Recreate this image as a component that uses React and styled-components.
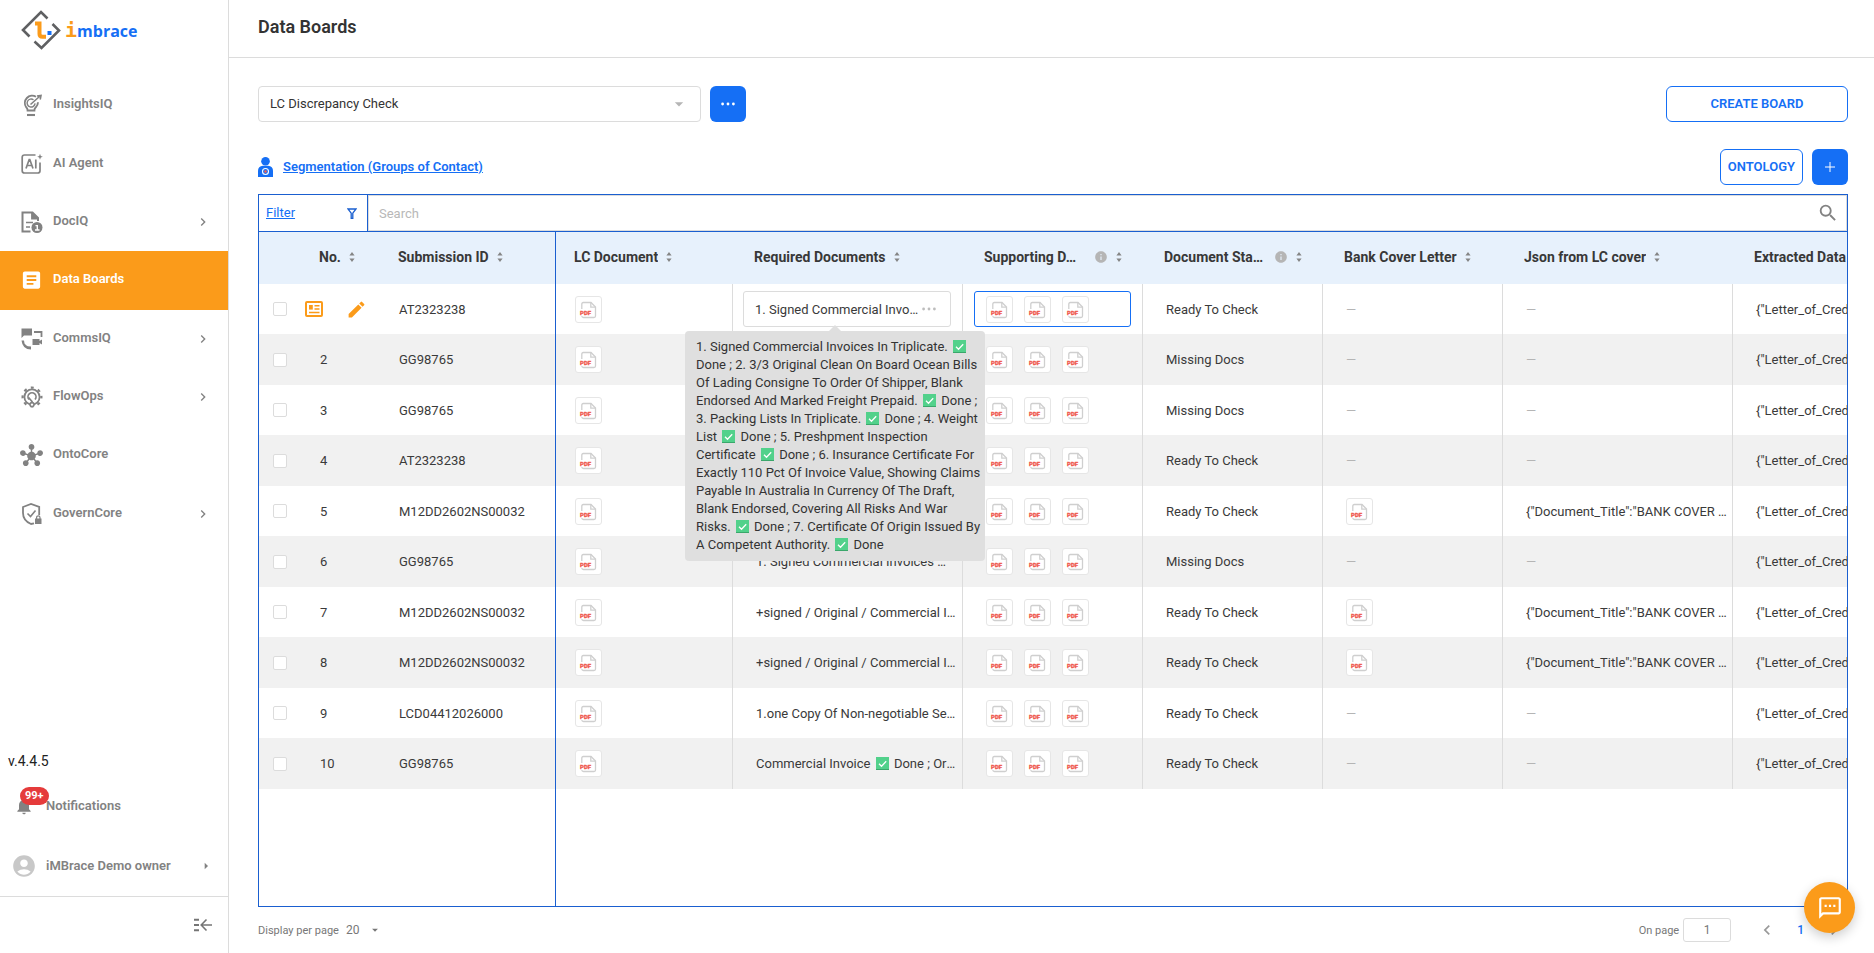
import { useState } from 'react';
import styled, { createGlobalStyle } from 'styled-components';
import {
  MdAccountCircle,
  MdArrowDropDown,
  MdArrowRight,
  MdArticle,
  MdChevronLeft,
  MdChevronRight,
  MdEdit,
  MdHub,
  MdInfo,
  MdNotifications,
  MdOutlineSms,
  MdSearch,
} from 'react-icons/md';

const GlobalStyle = createGlobalStyle`
  * {
    box-sizing: border-box;
  }

  body {
    margin: 0;
    font-family: Roboto, 'Liberation Sans', sans-serif;
    font-size: 13px;
    color: #3a3a3a;
    background: #fff;
  }

  button,
  input,
  select {
    font-family: inherit;
  }
`;

const blue = '#156ff5';
const line = '#1a5fd0';
const orange = '#fb9b1a';
const grey = '#828282';

/* ---------- icons ---------- */

const LogoMark = () => (
  <svg width='40' height='40' viewBox='0 0 40 40' fill='none' aria-hidden='true'>
    <g stroke='#5f6062' strokeWidth='2.6'>
      <path d='M26.5 8.5 20 2 2 20l6.5 6.5' />
      <path d='M31.5 14 38 20.5 20.5 38 13.5 31.5' />
    </g>
    <path d='M14 13.5h4.5V24q0 2.700 3 2.700H25' stroke={orange} strokeWidth='4' />
    <rect x='26.500' y='21' width='4' height='4' fill={blue} />
  </svg>
);

const BulbIcon = () => (
  <svg width='22' height='24' viewBox='0 0 22 24' fill='none' stroke='currentColor' aria-hidden='true'>
    <path d='M15 3.800A7.300 7.300 0 0 0 5.200 14.200q1.400 1.200 1.400 3.300h6.800q0-2.100 1.400-3.300a7.300 7.300 0 0 0 2.200-5' strokeWidth='1.900' />
    <path d='M6 22h8' strokeWidth='2.100' />
    <path d='M12.500 6.800a4 4 0 1 0 1.600 3.600' strokeWidth='1.400' />
    <path d='m9.500 11.500 9-8M16 3l4-.5-.8 4' strokeWidth='1.600' />
  </svg>
);

const AiIcon = () => (
  <svg width='22' height='22' viewBox='0 0 22 22' fill='none' stroke='currentColor' aria-hidden='true'>
    <path d='M14.500 2H3.500Q1.200 2 1.200 4.300v13.400Q1.200 20 3.500 20h13.200q2.300 0 2.300-2.300V9.500' strokeWidth='1.700' />
    <path d='m5 15.500 3.200-9h.6l3.200 9M6 12.500h5M14.800 6.500v9' strokeWidth='1.700' />
    <path d='m19 .8.800 2.200 2 .8-2 .8-.8 2.200-.8-2.200-2-.8 2-.8z' fill='currentColor' stroke='none' />
  </svg>
);

const DocIcon = () => (
  <svg width='22' height='22' viewBox='0 0 22 22' fill='none' stroke='currentColor' aria-hidden='true'>
    <path d='M9.500 20.500H1.500V1.500h10L17 7v3' strokeWidth='2' />
    <path d='M11 1.500V7.500h6' fill='currentColor' strokeWidth='1.800' />
    <path d='M5 11.500h7M5 16h4' strokeWidth='1.700' />
    <circle cx='16' cy='16.500' r='5.500' fill='currentColor' stroke='none' />
    <path d='M14.500 14.600h1.800v4M14 19h4.500' stroke='#fff' strokeWidth='1.400' />
  </svg>
);

const CommsIcon = () => (
  <svg width='22' height='22' viewBox='0 0 22 22' fill='currentColor' aria-hidden='true'>
    <path d='M.5.500H11v7H3L.5 10z' />
    <path d='M13 4h7.500v5' fill='none' stroke='currentColor' strokeWidth='1.800' />
    <path d='M11.500 11h7v2l2.500-1.500v5L18.500 15v2h-7z' />
    <path d='M.5 12.500h2.500l.5 3q1.600 2.300 3.300 2.800l3.200.2v3Q1.500 21.500.5 12.500z' />
  </svg>
);

const GearIcon = () => (
  <svg width='22' height='22' viewBox='0 0 22 22' fill='none' stroke='currentColor' aria-hidden='true'>
    <circle cx='11' cy='11' r='9.400' strokeWidth='2.200' strokeDasharray='2.950 4.430' strokeDashoffset='1.470' />
    <circle cx='11' cy='11' r='7.600' strokeWidth='1.800' />
    <path d='M8 13.500a4 4 0 1 1 6 0' strokeWidth='1.700' />
    <circle cx='11' cy='18.500' r='2' strokeWidth='1.600' fill='#fff' />
    <path d='M7.500 11.500 11 15.500v2' strokeWidth='1.800' />
  </svg>
);

const ShieldIcon = () => (
  <svg width='22' height='22' viewBox='0 0 22 22' fill='none' stroke='currentColor' aria-hidden='true'>
    <path d='M13 20.300 10 21Q2 17.500 2 10V4l8-3 8.200 3v8' strokeWidth='1.800' />
    <path d='m6.500 10.500 3 3 5-6' strokeWidth='1.600' />
    <path d='M14 15.500h6.500V21H14z' fill='currentColor' stroke='none' />
    <path d='M15.600 16v-1.500a1.700 1.700 0 0 1 3.400 0V16' strokeWidth='1.200' />
  </svg>
);

const CollapseIcon = () => (
  <svg width='20' height='14' viewBox='0 0 20 14' fill='none' stroke='#757575' aria-hidden='true'>
    <path d='M1 1.800h5M1 7h5M1 12.200h5' strokeWidth='2' />
    <path d='M19 7H9M13.500 1.500 8.200 7l5.300 5.500' strokeWidth='1.600' />
  </svg>
);

const SegmentIcon = () => (
  <svg width='15' height='20' viewBox='0 0 15 20' aria-hidden='true'>
    <circle cx='7.500' cy='4.300' r='4.300' fill={blue} />
    <path d='M0 20v-6q0-5 5-5.300h5q5 .3 5 5.300v6z' fill={blue} />
    <circle cx='7.500' cy='14.500' r='3' fill={blue} stroke='#fff' strokeWidth='1.100' />
    <circle cx='7.500' cy='14.500' r='1.300' fill='#f0605a' />
  </svg>
);

const FunnelIcon = () => (
  <svg width='10' height='11' viewBox='0 0 10 11' fill='none' stroke={line} aria-hidden='true'>
    <path d='M1 1h8L5.800 5.200V10.500H4.200V5.200z' strokeWidth='1.300' />
  </svg>
);

const CardIcon = () => (
  <svg width='18' height='16' viewBox='0 0 18 16' fill='none' stroke={orange} aria-hidden='true'>
    <rect x='1' y='1' width='16' height='14' rx='1' strokeWidth='2' />
    <path d='M4 4h3.800v4.600H4z' fill={orange} stroke='none' />
    <path d='M9.500 4.700H14.500M9.500 7.900H14.500M4 11.500h10.500' strokeWidth='1.500' />
  </svg>
);

const SortIcon = () => (
  <svg width='6' height='10' viewBox='0 0 6 10' fill='#858585' aria-hidden='true'>
    <path d='M3 0l2.600 3.400H.4zM3 10 .4 6.600h5.200z' />
  </svg>
);

const PdfIcon = () => (
  <svg width='25' height='25' viewBox='0 0 25 25' fill='none' role='img' aria-label='PDF'>
    <path d='M5.800 12V7q0-1.500 1.500-1.500H15l4.500 4.500v9q0 1.500-1.500 1.500H7.500q-1.500 0-1.700-1.500' stroke='#cfcfcf' strokeWidth='1.300' />
    <path d='M14.800 5.500v4.700h4.700' stroke='#cfcfcf' strokeWidth='1.300' />
    <path d='M4 12h13v6.500H4z' fill='#fff' />
    <text x='4' y='18' fontSize='6' fontWeight='900' fill='#ef5b4f' stroke='#ef5b4f' strokeWidth='0.300'>PDF</text>
  </svg>
);

const CheckMark = styled.svg.attrs({
  viewBox: '0 0 13 13',
  role: 'img',
  'aria-label': '✅',
})`
  width: 13px;
  height: 13px;
  margin: 0 2px;
  vertical-align: -2px;
`;

const Check = () => (
  <CheckMark>
    <path d='M0 0h13v13H0z' fill='#52d18b' />
    <path d='M0 12h13v1H0z' fill='#3aa76b' />
    <path d='m3 6.800 2.500 2.500 4.700-5' fill='none' stroke='#fff' strokeWidth='1.300' />
  </CheckMark>
);

const Dots = ({ color }) => (
  <svg width='14' height='4' viewBox='0 0 14 4' fill={color} aria-hidden='true'>
    <circle cx='1.600' cy='2' r='1.400' />
    <circle cx='7' cy='2' r='1.400' />
    <circle cx='12.400' cy='2' r='1.400' />
  </svg>
);

/* ---------- sidebar ---------- */

const Layout = styled.div`
  display: flex;
  height: 100vh;
  overflow: hidden;
`;

const Sidebar = styled.aside`
  display: flex;
  flex-direction: column;
  flex: 0 0 229px;
  border-right: 1px solid #dcdcdc;
`;

const Brand = styled.a`
  display: flex;
  align-items: center;
  gap: 4px;
  height: 76px;
  padding: 0 0 16px 21px;
  text-decoration: none;
`;

const Wordmark = styled.span`
  font: bold 16px 'Open Sans', sans-serif;
  color: ${blue};

  span {
    font: bold 20px 'DejaVu Sans Mono', monospace;
    color: ${orange};
  }
`;

const Nav = styled.nav`
  display: flex;
  flex-direction: column;
  height: 467px;
`;

const NavItem = styled.a`
  display: flex;
  flex: 1;
  align-items: center;
  padding: 0 17px 0 20px;
  font-weight: 600;
  text-decoration: none;
  color: ${({ $active }) => ($active ? '#fff' : grey)};
  background: ${({ $active }) => ($active ? orange : 'transparent')};

  .icon {
    display: flex;
    justify-content: center;
    width: 23px;
    margin-right: 10px;
  }

  .label {
    flex: 1;
    padding-bottom: 3px;
  }
`;

const SidebarFoot = styled.div`
  display: flex;
  flex-direction: column;
  margin-top: auto;
`;

const Version = styled.div`
  padding: 0 8px;
  font-size: 14px;
  line-height: 30px;
  color: #222;
`;

const FootLink = styled.a`
  display: flex;
  align-items: center;
  height: 60px;
  padding: 0 14px 0 11px;
  font-weight: 600;
  color: ${grey};
  text-decoration: none;

  .label {
    flex: 1;
    padding: 0 0 2px 9px;
  }
`;

const Bell = styled.span`
  position: relative;
  display: flex;
  justify-content: center;
  width: 26px;
`;

const Badge = styled.span`
  position: absolute;
  left: 9px;
  top: -9px;
  padding: 0 5px;
  border-radius: 9px;
  font-size: 11px;
  font-weight: 700;
  line-height: 18px;
  color: #fff;
  background: #e53b3b;
`;

const CollapseBar = styled.div`
  display: flex;
  justify-content: flex-end;
  align-items: center;
  height: 57px;
  padding-right: 15px;
  border-top: 1px solid #dcdcdc;
`;

/* ---------- shared controls ---------- */

const IconButton = styled.button`
  display: inline-flex;
  align-items: center;
  justify-content: center;
  padding: 0;
  border: none;
  background: none;
  color: inherit;
  cursor: pointer;
`;

const SquareButton = styled(IconButton)`
  width: 36px;
  height: 36px;
  border-radius: 6px;
  color: #fff;
  background: ${blue};
`;

const OutlineButton = styled.button`
  height: 36px;
  padding: 0 7px 2px;
  border: 1px solid ${blue};
  border-radius: 6px;
  font-size: 13px;
  font-weight: 600;
  color: ${blue};
  background: #fff;
  cursor: pointer;
  width: ${({ $wide }) => ($wide ? '182px' : 'auto')};
`;

/* ---------- main area ---------- */

const Main = styled.main`
  display: flex;
  flex: 1;
  flex-direction: column;
  min-width: 0;
`;

const PageHeader = styled.header`
  height: 58px;
  padding: 16px 29px;
  border-bottom: 1px solid #dcdcdc;

  h1 {
    margin: 0;
    font-size: 18px;
    font-weight: 600;
    line-height: 22px;
    color: #333;
  }
`;

const Content = styled.section`
  display: flex;
  flex: 1;
  flex-direction: column;
  min-height: 0;
  padding: 28px 26px 0 29px;
`;

const Toolbar = styled.div`
  display: flex;
  align-items: center;
  gap: 9px;
  margin-bottom: ${({ $tight }) => ($tight ? '9px' : '27px')};

  .push {
    margin-left: auto;
  }
`;

const SelectBox = styled.div`
  display: grid;
  align-items: center;
  width: 443px;

  > * {
    grid-area: 1 / 1;
  }

  svg {
    justify-self: end;
    margin-right: 12px;
    color: #b5b5b5;
    pointer-events: none;
  }

  select {
    width: 100%;
    height: 36px;
    padding: 0 11px 2px;
    border: 1px solid #dcdcdc;
    border-radius: 4px;
    font-size: 13px;
    color: #333;
    background: #fff;
    appearance: none;
  }
`;

const SegmentLink = styled.a`
  display: flex;
  align-items: center;
  gap: 10px;
  font-weight: 600;
  color: ${blue};

  span {
    padding-bottom: 2px;
  }
`;

const Board = styled.div`
  display: flex;
  flex: 1;
  flex-direction: column;
  min-height: 0;
  overflow: hidden;
  border: 1px solid ${line};
`;

const SearchRow = styled.div`
  display: flex;
  flex: 0 0 37px;
  border-bottom: 1px solid ${line};
`;

const FilterBox = styled.div`
  display: flex;
  align-items: center;
  justify-content: space-between;
  width: 109px;
  padding: 0 10px 0 7px;
  border-right: 1px solid ${line};

  a {
    padding-bottom: 2px;
    color: ${blue};
  }
`;

const SearchBox = styled.label`
  display: flex;
  flex: 1;
  align-items: center;
  padding-right: 7px;
  border: 1px solid #dcdcdc;
  color: ${grey};

  input {
    flex: 1;
    padding: 0 10px;
    border: none;
    outline: none;
    font-size: 13px;
    color: #333;

    &::placeholder {
      color: #b8b8b8;
    }
  }
`;

const Panels = styled.div`
  display: flex;
  flex: 1;
  min-height: 0;
`;

const Frozen = styled.div`
  flex: 0 0 297px;
  border-right: 1px solid ${line};
`;

const Scroller = styled.div`
  flex: 1;
  min-width: 0;
  overflow: hidden;
`;

const Table = styled.table`
  width: ${({ $width }) => $width};
  table-layout: fixed;
  border-collapse: separate;
  border-spacing: 0;

  thead tr {
    height: 52px;
    background: #e7f1fc;
  }

  tbody tr {
    height: 50px;
  }

  tbody tr:nth-child(even) {
    height: 51px;
    background: #f1f1f1;
  }
`;

const Th = styled.th`
  padding: 0 0 2px ${({ $pad = 21 }) => $pad}px;
  font-size: 14px;
  font-weight: 700;
  text-align: left;
  color: #383838;
`;

const HeadLabel = styled.div`
  display: flex;
  align-items: center;
  gap: 8px;
  white-space: nowrap;

  .name {
    overflow: hidden;
    text-overflow: ellipsis;
    width: ${({ $clip }) => ($clip ? '102px' : 'auto')};
  }
`;

const Td = styled.td`
  padding: 0 4px 0 ${({ $pad = 23 }) => $pad}px;
  border-right: ${({ $lined }) => ($lined ? '1px solid #dcdcdc' : 'none')};
  white-space: nowrap;
`;

const BoxTd = styled(Td)`
  padding: 0 11px 0 ${({ $pad = 11 }) => $pad}px;
`;

const RowActions = styled.td`
  padding: 0;

  div {
    display: flex;
    align-items: center;
    gap: 23px;
  }
`;

const Clip = styled.div`
  overflow: hidden;
  text-overflow: ellipsis;
  flex: 1;
`;

const Dash = styled.span`
  color: #b5b5b5;
`;

const Tick = styled.input.attrs({ type: 'checkbox' })`
  display: block;
  width: 14px;
  height: 14px;
  margin: 0;
  border: 1px solid #dcdcdc;
  border-radius: 2px;
  background: #fff;
  appearance: none;
`;

const Thumbs = styled.div`
  display: flex;
  gap: 11px;
`;

const Thumb = styled.button`
  display: flex;
  width: 27px;
  height: 27px;
  padding: 0;
  border: 1px solid #e6e6e6;
  border-radius: 3px;
  background: #fff;
`;

const CellBox = styled.div`
  position: relative;
  display: flex;
  align-items: center;
  gap: 3px;
  height: 36px;
  padding: 0 14px 0 11px;
  border: 1px solid ${({ $focus }) => ($focus ? blue : '#dcdcdc')};
  border-radius: 3px;
  background: #fff;
`;

const Tooltip = styled.div`
  position: absolute;
  z-index: 2;
  top: 39px;
  left: -59px;
  width: 300px;
  padding: 7px 4px 7px 11px;
  border-radius: 4px;
  line-height: 18px;
  white-space: normal;
  color: #333;
  background: #dfdfdf;

  &::before {
    content: '';
    position: absolute;
    top: -6px;
    left: 144px;
    border: 6px solid transparent;
    border-top: none;
    border-bottom-color: #dfdfdf;
  }
`;

const Pager = styled.footer`
  display: flex;
  align-items: center;
  height: 46px;
  font-size: 11px;
  color: #777;

  label {
    display: flex;
    align-items: center;
  }

  .page {
    margin-left: auto;
  }

  select {
    width: 22px;
    margin-left: 7px;
    padding: 0;
    border: none;
    font-size: 12px;
    color: #777;
    background: none;
    appearance: none;
  }

  input {
    width: 48px;
    height: 24px;
    margin-left: 4px;
    border: 1px solid #dcdcdc;
    border-radius: 3px;
    font-size: 12px;
    text-align: center;
    color: #777;
  }
`;

const PageLinks = styled.div`
  display: flex;
  align-items: center;
  gap: 20px;
  padding: 0 4px 0 26px;
  color: #999;

  a {
    font-size: 12px;
    font-weight: 500;
    color: ${blue};
    text-decoration: none;
  }
`;

const ChatButton = styled(IconButton)`
  position: fixed;
  right: 19px;
  bottom: 20px;
  width: 51px;
  height: 51px;
  border-radius: 50%;
  color: #fff;
  background: ${orange};
  box-shadow: 0 4px 12px rgba(0, 0, 0, 0.2);
`;

/* ---------- data ---------- */

const navItems = [
  { label: 'InsightsIQ', icon: <BulbIcon /> },
  { label: 'AI Agent', icon: <AiIcon /> },
  { label: 'DocIQ', icon: <DocIcon />, more: true },
  { label: 'Data Boards', icon: <MdArticle size={28} />, active: true },
  { label: 'CommsIQ', icon: <CommsIcon />, more: true },
  { label: 'FlowOps', icon: <GearIcon />, more: true },
  { label: 'OntoCore', icon: <MdHub size={23} /> },
  { label: 'GovernCore', icon: <ShieldIcon />, more: true },
];

const columns = [
  { name: 'LC Document', width: 177, pad: 18 },
  { name: 'Required Documents', width: 230 },
  { name: 'Supporting D…', width: 180, info: true },
  { name: 'Document Sta…', width: 180, info: true },
  { name: 'Bank Cover Letter', width: 180 },
  { name: 'Json from LC cover', width: 230 },
  { name: 'Extracted Data', width: 230 },
];

const invoices = '1. Signed Commercial Invoices In Triplicate.';
const signed = '+signed / Original / Commercial Invoice In Triplicate';
const cover = '{"Document_Title":"BANK COVER LETTER"}';
const credit = '{"Letter_of_Credit_Number":"LC"}';

const rows = [
  { no: 1, id: 'AT2323238', required: invoices, status: 'Ready To Check' },
  { no: 2, id: 'GG98765', required: invoices, status: 'Missing Docs' },
  { no: 3, id: 'GG98765', required: invoices, status: 'Missing Docs' },
  { no: 4, id: 'AT2323238', required: invoices, status: 'Ready To Check' },
  { no: 5, id: 'M12DD2602NS00032', required: signed, status: 'Ready To Check', bank: true },
  { no: 6, id: 'GG98765', required: '1. Signed Commercial Invoices …', status: 'Missing Docs' },
  { no: 7, id: 'M12DD2602NS00032', required: signed, status: 'Ready To Check', bank: true },
  { no: 8, id: 'M12DD2602NS00032', required: signed, status: 'Ready To Check', bank: true },
  { no: 9, id: 'LCD04412026000', required: '1.one Copy Of Non-negotiable Sea Waybill', status: 'Ready To Check' },
  {
    no: 10,
    id: 'GG98765',
    required: (
      <>
        Commercial Invoice <Check /> Done ; Original Bill Of Lading
      </>
    ),
    status: 'Ready To Check',
  },
];

const Heading = ({ name, pad, info }) => (
  <Th $pad={pad}>
    <HeadLabel $clip={info}>
      <span className='name'>{name}</span>
      {info && <MdInfo size={14} color='#b5b5b5' />}
      <SortIcon />
    </HeadLabel>
  </Th>
);

const PdfThumbs = ({ count }) => (
  <Thumbs>
    {Array.from({ length: count }, (_, index) => (
      <Thumb key={index} type='button'>
        <PdfIcon />
      </Thumb>
    ))}
  </Thumbs>
);

const RequiredTooltip = () => (
  <Tooltip role='tooltip'>
    1. Signed Commercial Invoices In Triplicate. <Check />
    <br />
    Done ; 2. 3/3 Original Clean On Board Ocean Bills
    <br />
    Of Lading Consigne To Order Of Shipper, Blank
    <br />
    Endorsed And Marked Freight Prepaid. <Check /> Done ;
    <br />
    3. Packing Lists In Triplicate. <Check /> Done ; 4. Weight
    <br />
    List <Check /> Done ; 5. Preshpment Inspection
    <br />
    Certificate <Check /> Done ; 6. Insurance Certificate For
    <br />
    Exactly 110 Pct Of Invoice Value, Showing Claims
    <br />
    Payable In Australia In Currency Of The Draft,
    <br />
    Blank Endorsed, Covering All Risks And War
    <br />
    Risks. <Check /> Done ; 7. Certificate Of Origin Issued By
    <br />A Competent Authority. <Check /> Done
  </Tooltip>
);

const SideMenu = () => (
  <Sidebar>
    <Brand href='#' aria-label='imbrace'>
      <LogoMark />
      <Wordmark>
        <span>i</span>mbrace
      </Wordmark>
    </Brand>
    <Nav>
      {navItems.map(({ label, icon, active, more }) => (
        <NavItem key={label} href='#' $active={active}>
          <span className='icon'>{icon}</span>
          <span className='label'>{label}</span>
          {more && <MdChevronRight size={16} />}
        </NavItem>
      ))}
    </Nav>
    <SidebarFoot>
      <Version>v.4.4.5</Version>
      <FootLink href='#'>
        <Bell>
          <MdNotifications size={20} />
          <Badge>99+</Badge>
        </Bell>
        <span className='label'>Notifications</span>
      </FootLink>
      <FootLink href='#'>
        <MdAccountCircle size={26} color='#c8c8c8' />
        <span className='label'>iMBrace Demo owner</span>
        <MdArrowRight size={16} />
      </FootLink>
      <CollapseBar>
        <IconButton type='button' aria-label='Collapse menu'>
          <CollapseIcon />
        </IconButton>
      </CollapseBar>
    </SidebarFoot>
  </Sidebar>
);

const FrozenTable = () => (
  <Table $width='100%'>
    <colgroup>
      <col width='46' />
      <col width='79' />
      <col />
    </colgroup>
    <thead>
      <tr>
        <Th />
        <Heading name='No.' pad={14} />
        <Heading name='Submission ID' pad={14} />
      </tr>
    </thead>
    <tbody>
      {rows.map(({ no, id }) => (
        <tr key={no}>
          <Td $pad={14}>
            <Tick aria-label={`Select row ${no}`} />
          </Td>
          {no === 1 ? (
            <RowActions>
              <div>
                <IconButton type='button' aria-label='Open row'>
                  <CardIcon />
                </IconButton>
                <IconButton type='button' aria-label='Edit row'>
                  <MdEdit size={21} color={orange} />
                </IconButton>
              </div>
            </RowActions>
          ) : (
            <Td $pad={15}>{no}</Td>
          )}
          <Td $pad={15}>{id}</Td>
        </tr>
      ))}
    </tbody>
  </Table>
);

const DataTable = () => (
  <Table $width='1407px'>
    <colgroup>
      {columns.map(({ name, width }) => (
        <col key={name} width={width} />
      ))}
    </colgroup>
    <thead>
      <tr>
        {columns.map((column) => (
          <Heading key={column.name} {...column} />
        ))}
      </tr>
    </thead>
    <tbody>
      {rows.map(({ no, required, status, bank }) => (
        <tr key={no}>
          <Td $pad={19} $lined>
            <PdfThumbs count={1} />
          </Td>
          {no === 1 ? (
            <>
              <BoxTd $pad={10} $lined>
                <CellBox>
                  <Clip>{required}</Clip>
                  <Dots color='#bdbdbd' />
                  <RequiredTooltip />
                </CellBox>
              </BoxTd>
              <BoxTd $lined>
                <CellBox $focus>
                  <PdfThumbs count={3} />
                </CellBox>
              </BoxTd>
            </>
          ) : (
            <>
              <Td $lined>
                <Clip>{required}</Clip>
              </Td>
              <Td $lined>
                <PdfThumbs count={3} />
              </Td>
            </>
          )}
          <Td $lined>{status}</Td>
          <Td $lined>{bank ? <PdfThumbs count={1} /> : <Dash>—</Dash>}</Td>
          <Td $lined>{bank ? <Clip>{cover}</Clip> : <Dash>—</Dash>}</Td>
          <Td $lined>{credit}</Td>
        </tr>
      ))}
    </tbody>
  </Table>
);

const App = () => {
  const [search, setSearch] = useState('');
  const [page, setPage] = useState('1');

  return (
    <>
      <GlobalStyle />
      <Layout>
        <SideMenu />
        <Main>
          <PageHeader>
            <h1>Data Boards</h1>
          </PageHeader>
          <Content>
            <Toolbar>
              <SelectBox>
                <select aria-label='Board'>
                  <option>LC Discrepancy Check</option>
                </select>
                <MdArrowDropDown size={20} />
              </SelectBox>
              <SquareButton type='button' aria-label='Board actions'>
                <Dots color='#fff' />
              </SquareButton>
              <OutlineButton className='push' type='button' $wide>
                CREATE BOARD
              </OutlineButton>
            </Toolbar>
            <Toolbar $tight>
              <SegmentLink href='#'>
                <SegmentIcon />
                <span>Segmentation (Groups of Contact)</span>
              </SegmentLink>
              <OutlineButton className='push' type='button'>
                ONTOLOGY
              </OutlineButton>
              <SquareButton type='button' aria-label='Add row'>
                <svg width='10' height='10' viewBox='0 0 10 10' stroke='#fff' aria-hidden='true'>
                  <path d='M5 0v10M0 5h10' />
                </svg>
              </SquareButton>
            </Toolbar>
            <Board>
              <SearchRow>
                <FilterBox>
                  <a href='#'>Filter</a>
                  <FunnelIcon />
                </FilterBox>
                <SearchBox>
                  <input
                    type='text'
                    placeholder='Search'
                    aria-label='Search'
                    value={search}
                    onChange={(e) => setSearch(e.target.value)}
                  />
                  <MdSearch size={22} />
                </SearchBox>
              </SearchRow>
              <Panels>
                <Frozen>
                  <FrozenTable />
                </Frozen>
                <Scroller>
                  <DataTable />
                </Scroller>
              </Panels>
            </Board>
            <Pager>
              <label>
                Display per page
                <select defaultValue='20'>
                  <option>20</option>
                </select>
                <MdArrowDropDown size={14} />
              </label>
              <label className='page'>
                On page
                <input type='text' value={page} onChange={(e) => setPage(e.target.value)} />
              </label>
              <PageLinks>
                <IconButton type='button' aria-label='Previous page'>
                  <MdChevronLeft size={20} />
                </IconButton>
                <a href='#'>1</a>
                <IconButton type='button' aria-label='Next page'>
                  <MdChevronRight size={20} />
                </IconButton>
              </PageLinks>
            </Pager>
          </Content>
        </Main>
        <ChatButton type='button' aria-label='Open chat'>
          <MdOutlineSms size={26} />
        </ChatButton>
      </Layout>
    </>
  );
};

export default App;
